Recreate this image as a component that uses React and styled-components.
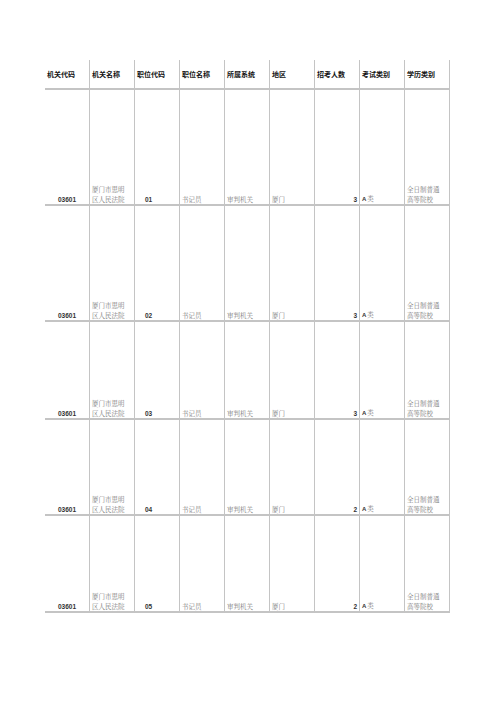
import React from "react";
import styled, { createGlobalStyle } from "styled-components";

const GlobalStyle = createGlobalStyle`
  body {
    margin: 0;
    background: #ffffff;
    font-family: "Noto Sans CJK SC", "Liberation Sans", sans-serif;
  }
`;

const Page = styled.div`
  width: 496px;
  height: 702px;
  padding: 60px 0 0 45px;
  box-sizing: border-box;
`;

const Table = styled.div`
  display: grid;
  grid-template-columns: repeat(9, 45px);
  grid-template-rows: ${(p) => p.rows.map((h) => `${h}px`).join(" ")};
`;

const Cell = styled.div`
  box-sizing: border-box;
  border-right: 1px solid #c4c4c4;
  border-bottom: 2px solid #c4c4c4;
  padding: 0 2px 0 2px;
  display: flex;
  flex-direction: column;
  justify-content: ${(p) => (p.head ? "center" : "flex-end")};
  align-items: ${(p) =>
    p.align === "right" ? "flex-end" : p.align === "center" ? "center" : "flex-start"};
  overflow: hidden;
`;

const HeadText = styled.span`
  font-size: 7px;
  font-weight: 700;
  color: #111;
  white-space: nowrap;
  line-height: 1;
`;

const Code = styled.span`
  font-family: "Liberation Sans", Arial, sans-serif;
  font-size: 6.5px;
  font-weight: 700;
  color: #333;
  line-height: 9.5px;
  padding-left: ${(p) => p.indent || 0}px;
`;

const Text = styled.span`
  font-family: "Noto Serif CJK SC", "Noto Sans CJK SC", serif;
  font-size: 6.5px;
  color: #7a7a7a;
  line-height: 9.5px;
  white-space: nowrap;
`;

const Mixed = styled.span`
  display: flex;
  align-items: baseline;
  line-height: 9.5px;
`;

const Letter = styled.span`
  font-family: "Liberation Sans", Arial, sans-serif;
  font-size: 6px;
  font-weight: 700;
  color: #333;
  margin-right: 1px;
`;

const headers = [
  "机关代码",
  "机关名称",
  "职位代码",
  "职位名称",
  "所属系统",
  "地区",
  "招考人数",
  "考试类别",
  "学历类别",
];

const rows = [
  { pos: "01", count: 3 },
  { pos: "02", count: 3 },
  { pos: "03", count: 3 },
  { pos: "04", count: 2 },
  { pos: "05", count: 2 },
];

const heights = [30, 116, 116, 98, 96, 97];

export default function App() {
  return (
    <>
      <GlobalStyle />
      <Page>
        <Table rows={heights}>
          {headers.map((h) => (
            <Cell head key={h}>
              <HeadText>{h}</HeadText>
            </Cell>
          ))}
          {rows.map((r) => (
            <React.Fragment key={r.pos}>
              <Cell align="center">
                <Code>03601</Code>
              </Cell>
              <Cell>
                <Text>厦门市思明</Text>
                <Text>区人民法院</Text>
              </Cell>
              <Cell>
                <Code indent={8}>{r.pos}</Code>
              </Cell>
              <Cell>
                <Text>书记员</Text>
              </Cell>
              <Cell>
                <Text>审判机关</Text>
              </Cell>
              <Cell>
                <Text>厦门</Text>
              </Cell>
              <Cell align="right">
                <Code>{r.count}</Code>
              </Cell>
              <Cell>
                <Mixed>
                  <Letter>A</Letter>
                  <Text>类</Text>
                </Mixed>
              </Cell>
              <Cell>
                <Text>全日制普通</Text>
                <Text>高等院校</Text>
              </Cell>
            </React.Fragment>
          ))}
        </Table>
      </Page>
    </>
  );
}
